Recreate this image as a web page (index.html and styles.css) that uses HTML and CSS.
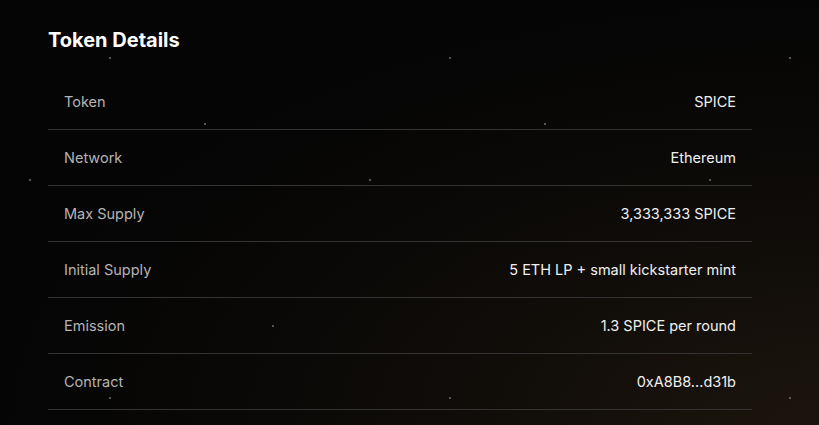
FILE: index.html
```html
<html>

<head>
    <link rel="stylesheet" href="styles.css">
</head>

<body>

    <section class="details">
        <h2 class="details-title">Token Details</h2>
        <div class="details-table">
            <div class="row">
                <span class="label">Token</span>
                <span class="value">SPICE</span>
            </div>
            <div class="row">
                <span class="label">Network</span>
                <span class="value">Ethereum</span>
            </div>
            <div class="row">
                <span class="label">Max Supply</span>
                <span class="value">3,333,333 SPICE</span>
            </div>
            <div class="row">
                <span class="label">Initial Supply</span>
                <span class="value">5 ETH LP + small kickstarter mint</span>
            </div>
            <div class="row">
                <span class="label">Emission</span>
                <span class="value">1.3 SPICE per round</span>
            </div>
            <div class="row">
                <span class="label">Contract</span>
                <span class="value">0xA8B8...d31b</span>
            </div>
        </div>
    </section>

</body>

</html>
```

FILE: styles.css
```css
body {
    font-family: Inter, "Noto Sans", sans-serif;
    margin: 0;
    padding: 28px 48px;
    height: 100vh;
    box-sizing: border-box;
    overflow: hidden;
    color: #eeeeee;
    background-color: #050505;
    background-image:
        radial-gradient(circle, rgba(120, 120, 120, 0.7) 0.7px, transparent 1.1px),
        radial-gradient(circle, rgba(120, 120, 120, 0.7) 0.7px, transparent 1.1px),
        radial-gradient(circle, rgba(120, 120, 120, 0.7) 0.7px, transparent 1.1px),
        radial-gradient(circle, rgba(120, 120, 120, 0.7) 0.7px, transparent 1.1px),
        radial-gradient(ellipse at 100% 100%, #1c150e 0%, #0e0b08 35%, rgba(5, 5, 5, 0) 70%);
    background-size: 340px 340px, 340px 340px, 340px 340px, 340px 340px, 100% 100%;
    background-position: -60px -112px, 35px -46px, -140px 10px, 103px 156px, 0 0;
    background-repeat: repeat, repeat, repeat, repeat, no-repeat;
}

.details {
    width: 704px;
}

.details-title {
    margin: 0 0 22px;
    font-size: 20px;
    line-height: 24px;
    font-weight: 700;
    color: #ffffff;
}

.details-table {
    display: flex;
    flex-direction: column;
}

.row {
    display: flex;
    justify-content: space-between;
    align-items: center;
    height: 55px;
    padding: 0 16px;
    border-bottom: 1px solid #333333;
    font-size: 14.5px;
}

.label {
    color: #b4b4b4;
}

.value {
    color: #f0f0f0;
}
```
